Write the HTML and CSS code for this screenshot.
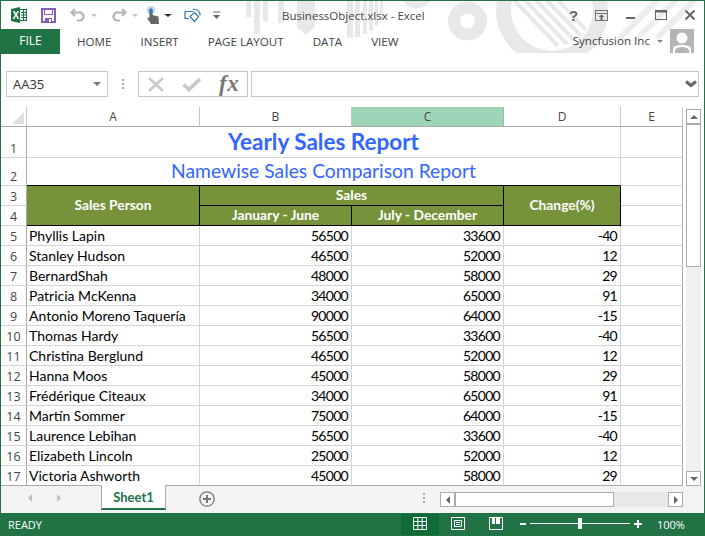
FILE: index.html
```html
<!DOCTYPE html>
<html lang="en">
<head>
    <meta charset="UTF-8">
    <meta name="viewport" content="width=device-width, initial-scale=1.0">
    <title>BusinessObject.xlsx - Excel</title>
    <link rel="stylesheet" href="styles.css">
</head>
<body>
<div class="window">
    <svg class="art" width="705" height="54" viewBox="0 0 705 54">
        <defs>
            <clipPath id="inner"><circle cx="552" cy="10" r="41"/></clipPath>
        </defs>
        <g fill="#e8e8e8">
            <rect x="246" y="1" width="5" height="16"/><rect x="254" y="1" width="6" height="33"/>
            <rect x="263" y="1" width="5" height="20"/><rect x="278" y="1" width="6" height="22"/>
            <path d="M297 1h18v26l-9 8-9-8z"/>
            <rect x="347" y="1" width="6" height="37"/><rect x="355" y="1" width="5" height="36"/>
            <rect x="363" y="1" width="4" height="33"/><rect x="369" y="1" width="4" height="30"/>
            <rect x="375" y="1" width="3" height="25"/><rect x="380" y="1" width="3" height="18"/>
            <path d="M403 1h27a16 16 0 0 1-27 0z"/>
            <path fill-rule="evenodd" d="M467.500 1.500a19.500 19.500 0 1 0 .1 0zM467.500 13.500a7.500 7.500 0 1 1-.1 0z"/>
            <circle cx="552" cy="10" r="56"/>
            <path d="M617 37l35-36h9l-40 40zM634 38l36-37h9l-41 41zM655 36l34-35h9l-39 39z" opacity=".8"/>
        </g>
        <circle cx="552" cy="10" r="41" fill="#fff"/>
        <g clip-path="url(#inner)" fill="none" stroke="#e8e8e8" stroke-width="4">
            <path d="M510 -4l48 50M521 -4l46 48M532 -4l42 44M543 -4l38 40M554 -4l32 34"/>
        </g>
        <rect x="0" y="53" width="705" height="1" fill="#fff"/>
    </svg>

    <div class="titlebar">
        <div class="qat">
            <svg class="icon" width="16" height="16" viewBox="0 0 16 16">
                <rect x="8.5" y="2.5" width="7" height="11" fill="#fff" stroke="#1e7145"/>
                <path d="M10 5.500h5M10 8h5M10 10.500h5M12.500 2v12" stroke="#1e7145"/>
                <path d="M0 2l9-2v16l-9-2z" fill="#1e7145"/>
                <text x="1.5" y="12" class="xl">X</text>
            </svg>
            <svg class="icon save" width="15" height="15" viewBox="0 0 15 15">
                <path d="M1 1h13v13H1z" fill="#fff" stroke="#8a5bb3" stroke-width="2"/>
                <path d="M3 1h9v6H3zM4 10h7v5H4z" fill="#8a5bb3"/>
                <path d="M4 2h7v4H4zM8 11h2v3H8z" fill="#fff"/>
            </svg>
            <svg class="icon undo" width="16" height="14" viewBox="0 0 16 14">
                <path d="M5 1L1.500 4.500 5 8M2 4.500h7a4 4 0 0 1 1 8H7" fill="none" stroke="#b4b4b4" stroke-width="2.200"/>
            </svg>
            <span class="caret light"></span>
            <svg class="icon redo" width="16" height="14" viewBox="0 0 16 14">
                <path d="M11 1l3.500 3.500L11 8M14 4.500H7a4 4 0 0 0-1 8h3" fill="none" stroke="#b4b4b4" stroke-width="2.200"/>
            </svg>
            <span class="caret light"></span>
            <svg class="icon touch" width="16" height="18" viewBox="0 0 16 18">
                <circle cx="5" cy="4" r="4" fill="#bcd3ec"/>
                <path d="M3.500 4a1.500 1.500 0 0 1 3 0v5l6 1.500.5 7.500H5L1 12l2.500-.5z" fill="#666"/>
                <path d="M3.500 4a1.500 1.500 0 0 1 3 0v4h-3z" fill="#3b78b9"/>
            </svg>
            <span class="caret dark"></span>
            <svg class="icon shapes" width="18" height="16" viewBox="0 0 18 16">
                <path d="M1 4.500h8.500M1 4.500v7h4" fill="none" stroke="#2f75b5" stroke-width="1.200"/>
                <path d="M9 2.500a5.500 5.500 0 0 1 7 6" fill="none" stroke="#2f75b5" stroke-width="1.200"/>
                <path d="M10.500 5.500l4 4-4 5-4.500-5z" fill="#fff" stroke="#2f75b5" stroke-width="1.200"/>
            </svg>
            <svg class="icon more" width="7" height="9" viewBox="0 0 7 9">
                <path d="M0 1h7" stroke="#666"/><path d="M0 4h7L3.500 8z" fill="#666"/>
            </svg>
        </div>
        <div class="doc-title">BusinessObject.xlsx - Excel</div>
        <div class="win-buttons">
            <span class="help">?</span>
            <svg width="13" height="11" viewBox="0 0 13 11">
                <rect x="0.5" y="0.5" width="12" height="10" fill="none" stroke="#777"/>
                <path d="M0 3.500h13" stroke="#777"/><path d="M6.500 4.500l-3 2.500h2v3h2V7h2z" fill="#666"/>
            </svg>
            <svg class="min" width="9" height="2" viewBox="0 0 9 2"><rect width="9" height="2" fill="#666"/></svg>
            <svg class="max" width="12" height="10" viewBox="0 0 12 10">
                <rect x="0.5" y="0.5" width="11" height="9" fill="none" stroke="#666"/>
                <rect width="12" height="2.500" fill="#666"/>
            </svg>
            <svg width="10" height="10" viewBox="0 0 10 10"><path d="M.5.5l9 9M9.500.5l-9 9" stroke="#666" stroke-width="2"/></svg>
        </div>
    </div>

    <div class="ribbon">
        <div class="tab-file">FILE</div>
        <nav class="tabs">
            <span>HOME</span>
            <span>INSERT</span>
            <span>PAGE LAYOUT</span>
            <span>DATA</span>
            <span>VIEW</span>
        </nav>
        <div class="account">
            <span class="account-name">Syncfusion Inc</span>
            <span class="caret small"></span>
            <svg class="avatar" width="24" height="24" viewBox="0 0 24 24">
                <rect width="24" height="24" fill="#b4b4b4"/>
                <circle cx="12" cy="9" r="5.500" fill="#fff"/>
                <path d="M3 24v-4c0-3 4-4 9-4s9 1 9 4v4z" fill="#fff"/>
                <path d="M5 24v-3c1-2 4-3 7-3s6 1 7 3v3z" fill="#b4b4b4"/>
            </svg>
        </div>
    </div>

    <div class="formula-bar">
        <div class="name-box">
            <span>AA35</span>
            <span class="caret grey"></span>
        </div>
        <div class="dots"><i></i><i></i><i></i></div>
        <div class="fx-box">
            <svg width="16" height="15" viewBox="0 0 16 15"><path d="M1 1l14 13M15 1L1 14" stroke="#c8c8c8" stroke-width="2.500"/></svg>
            <svg width="20" height="15" viewBox="0 0 20 15"><path d="M1.500 7.500l5.500 5L18 2" fill="none" stroke="#c8c8c8" stroke-width="3.500"/></svg>
            <span class="fx">fx</span>
        </div>
        <div class="formula-input">
            <svg width="12" height="8" viewBox="0 0 12 8"><path d="M1 1.500l5 4 5-4" fill="none" stroke="#666" stroke-width="3"/></svg>
        </div>
    </div>

    <div class="sheet-area">
        <table class="grid">
            <colgroup>
                <col class="c-row"><col class="c-a"><col class="c-b"><col class="c-c"><col class="c-d"><col class="c-e">
            </colgroup>
            <thead>
                <tr class="r-head">
                    <th class="corner"><span class="corner-mark"></span></th>
                    <th>A</th><th>B</th><th class="selected">C</th><th>D</th><th>E</th>
                </tr>
            </thead>
            <tbody id="rows">
                <tr class="r-title">
                    <th class="rn">1</th>
                    <td colspan="4" class="title">Yearly Sales Report</td><td></td>
                </tr>
                <tr class="r-sub">
                    <th class="rn">2</th>
                    <td colspan="4" class="subtitle">Namewise Sales Comparison Report</td><td></td>
                </tr>
                <tr>
                    <th class="rn">3</th>
                    <td rowspan="2" class="hd">Sales Person</td>
                    <td colspan="2" class="hd">Sales</td>
                    <td rowspan="2" class="hd">Change(%)</td><td></td>
                </tr>
                <tr>
                    <th class="rn">4</th>
                    <td class="hd">January - June</td>
                    <td class="hd">July - December</td><td></td>
                </tr>
                <tr><th class="rn">5</th><td>Phyllis Lapin</td><td class="num">56500</td><td class="num">33600</td><td class="num">-40</td><td></td></tr>
                <tr><th class="rn">6</th><td>Stanley Hudson</td><td class="num">46500</td><td class="num">52000</td><td class="num">12</td><td></td></tr>
                <tr><th class="rn">7</th><td>BernardShah</td><td class="num">48000</td><td class="num">58000</td><td class="num">29</td><td></td></tr>
                <tr><th class="rn">8</th><td>Patricia McKenna</td><td class="num">34000</td><td class="num">65000</td><td class="num">91</td><td></td></tr>
                <tr><th class="rn">9</th><td>Antonio Moreno Taquería</td><td class="num">90000</td><td class="num">64000</td><td class="num">-15</td><td></td></tr>
                <tr><th class="rn">10</th><td>Thomas Hardy</td><td class="num">56500</td><td class="num">33600</td><td class="num">-40</td><td></td></tr>
                <tr><th class="rn">11</th><td>Christina Berglund</td><td class="num">46500</td><td class="num">52000</td><td class="num">12</td><td></td></tr>
                <tr><th class="rn">12</th><td>Hanna Moos</td><td class="num">45000</td><td class="num">58000</td><td class="num">29</td><td></td></tr>
                <tr><th class="rn">13</th><td>Frédérique Citeaux</td><td class="num">34000</td><td class="num">65000</td><td class="num">91</td><td></td></tr>
                <tr><th class="rn">14</th><td>Martín Sommer</td><td class="num">75000</td><td class="num">64000</td><td class="num">-15</td><td></td></tr>
                <tr><th class="rn">15</th><td>Laurence Lebihan</td><td class="num">56500</td><td class="num">33600</td><td class="num">-40</td><td></td></tr>
                <tr><th class="rn">16</th><td>Elizabeth Lincoln</td><td class="num">25000</td><td class="num">52000</td><td class="num">12</td><td></td></tr>
                <tr class="r-last"><th class="rn">17</th><td>Victoria Ashworth</td><td class="num">45000</td><td class="num">58000</td><td class="num">29</td><td></td></tr>
            </tbody>
        </table>
        <div class="vscroll">
            <div class="sb-btn"><span class="tri up"></span></div>
            <div class="sb-track"><div class="sb-thumb"></div></div>
            <div class="sb-btn"><span class="tri down"></span></div>
        </div>
    </div>

    <div class="sheet-tabs">
        <div class="sheet-nav"><span class="tri left pale"></span><span class="tri right pale"></span></div>
        <div class="sheet-tab">Sheet1</div>
        <svg class="add-sheet" width="16" height="16" viewBox="0 0 16 16">
            <circle cx="8" cy="8" r="7.200" fill="none" stroke="#777" stroke-width="1.300"/>
            <path d="M8 4v8M4 8h8" stroke="#777" stroke-width="2"/>
        </svg>
        <div class="dots tab-dots"><i></i><i></i><i></i></div>
        <div class="hscroll">
            <div class="sb-btn"><span class="tri left"></span></div>
            <div class="h-track"><div class="h-thumb"></div></div>
            <div class="sb-btn"><span class="tri right"></span></div>
        </div>
    </div>

    <div class="statusbar">
        <span class="ready">READY</span>
        <div class="views">
            <div class="view active">
                <svg width="14" height="13" viewBox="0 0 14 13"><path d="M.5.5h13v12H.5zM.5 4.500h13M.5 8.500h13M4.800.5v12M9.200.5v12" fill="none" stroke="#fff"/></svg>
            </div>
            <div class="view">
                <svg width="14" height="13" viewBox="0 0 14 13"><path d="M.5.5h13v12H.5zM3.500 3.500h7v6h-7zM5 5.500h4M5 7.500h4" fill="none" stroke="#fff"/></svg>
            </div>
            <div class="view">
                <svg width="14" height="13" viewBox="0 0 14 13"><path d="M.5.5h13v12H.5z" fill="none" stroke="#fff"/><path d="M3 0h3v7H3zM7 0h4v7H7z" fill="#fff"/></svg>
            </div>
        </div>
        <div class="zoom">
            <span class="zoom-minus"></span>
            <div class="zoom-line"><span class="zoom-knob"></span></div>
            <span class="zoom-plus"></span>
        </div>
        <span class="percent">100%</span>
    </div>
</div>
</body>
</html>
```

FILE: styles.css
```css
* { box-sizing: border-box; }
body {
    margin: 0;
    padding: 0;
    font-family: "Open Sans", Arial, sans-serif;
    background: #fff;
}
.window {
    position: relative;
    width: 705px;
    height: 536px;
    border: 1px solid #217346;
    border-bottom: none;
    display: flex;
    flex-direction: column;
    overflow: hidden;
    color: #444;
}
.art { position: absolute; top: -1px; left: -1px; }

/* title bar */
.titlebar {
    position: relative;
    height: 28px;
    display: flex;
    align-items: center;
    flex-shrink: 0;
}
.qat { display: flex; align-items: center; width: 281px; padding-left: 10px; }
.qat .save { margin-left: 14px; }
.qat .undo { margin-left: 14px; }
.qat .redo { margin-left: 14px; }
.qat .touch { margin-left: 8px; }
.qat .shapes { margin-left: 12px; }
.qat .more { margin-left: 11px; }
.xl { font: bold 10px "Liberation Sans", sans-serif; fill: #fff; }
.caret { display: inline-block; width: 0; height: 0; border-style: solid; border-color: #aaa transparent transparent; border-width: 3px 3px 0; margin-left: 5px; }
.caret.light { border-top-color: #c4c4c4; }
.caret.dark { border-top-color: #333; border-width: 3px 4px 0; margin-left: 2px; }
.caret.small { border-top-color: #888; margin-left: 7px; }
.caret.grey { border-top-color: #777; border-width: 4px 4px 0; }
.doc-title { position: relative; font-size: 11.500px; color: #444; margin-top: 1px; }
.win-buttons {
    position: relative;
    margin-left: auto;
    display: flex;
    align-items: center;
    gap: 18px;
    padding-right: 9px;
}
.help { font: bold 15px "Liberation Sans", sans-serif; color: #666; width: 8px; }
.win-buttons .min { margin-top: 6px; }
.win-buttons .max { margin-left: 2px; }

/* ribbon */
.ribbon {
    position: relative;
    height: 25px;
    display: flex;
    flex-shrink: 0;
}
.tab-file {
    width: 59px;
    background: #217346;
    color: #fff;
    font-size: 12px;
    text-align: center;
    line-height: 24px;
}
.tabs { display: flex; font-size: 11.600px; line-height: 25px; gap: 29px; padding-left: 17px; color: #444; }
.account { margin-left: auto; display: flex; align-items: flex-start; padding-right: 10px; }
.account-name { font-size: 11.600px; line-height: 24px; }
.account .caret { margin-top: 11px; margin-right: 7px; }

/* formula bar */
.formula-bar {
    display: flex;
    align-items: stretch;
    height: 26px;
    margin-top: 17px;
    padding-left: 5px;
    padding-right: 5px;
    flex-shrink: 0;
}
.name-box {
    width: 102px;
    border: 1px solid #c6c6c6;
    display: flex;
    align-items: center;
    justify-content: space-between;
    padding: 0 6px;
    font-size: 13px;
    color: #333;
}
.dots { display: flex; flex-direction: column; justify-content: center; gap: 2px; width: 30px; align-items: center; }
.dots i { display: block; width: 2px; height: 2px; background: #aaa; }
.fx-box {
    width: 110px;
    border: 1px solid #c6c6c6;
    display: flex;
    align-items: center;
    gap: 17px;
    padding-left: 9px;
}
.fx-box svg + svg { margin-left: 1px; }
.fx { font: italic bold 23px/24px "Liberation Serif", serif; color: #777; letter-spacing: .5px; }
.formula-input {
    flex: 1;
    margin-left: 3px;
    border: 1px solid #c6c6c6;
    display: flex;
    align-items: center;
    justify-content: flex-end;
}
.formula-input svg { margin-right: 1px; }

/* sheet */
.sheet-area {
    display: flex;
    margin-top: 10px;
    height: 379px;
    flex-shrink: 0;
}
.grid {
    table-layout: fixed;
    border-collapse: separate;
    border-spacing: 0;
    width: 682px;
    height: 379px;
    font-family: Lato, "Liberation Sans", sans-serif;
    font-size: 14px;
    color: #000;
}
.c-row { width: 26px; }
.c-a { width: 173px; }
.c-b, .c-c { width: 152px; }
.c-d { width: 117px; }
.c-e { width: 62px; }
.grid tr { height: 20px; }
.grid .r-title { height: 31px; }
.grid .r-sub { height: 28px; }
.grid td, .grid th {
    padding: 0;
    border-right: 1px solid #d4d4d4;
    border-bottom: 1px solid #d4d4d4;
    font-weight: normal;
    overflow: hidden;
    white-space: nowrap;
}
.grid td { padding: 0 2px; line-height: 17px; }
.grid thead th {
    font: 12px "Open Sans", Arial, sans-serif;
    color: #444;
    text-align: center;
    border-right-color: #c6c6c6;
    border-bottom-color: #ababab;
    background: #fff;
}
.grid thead th.selected { background: #9fd5b7; border-right-color: #9fb7a8; }
.corner { position: relative; }
.corner-mark {
    position: absolute;
    right: 2px;
    bottom: 2px;
    width: 0;
    height: 0;
    border-style: solid;
    border-width: 0 0 12px 12px;
    border-color: transparent transparent #dfdfdf;
}
.grid .rn {
    font: 12.500px "Open Sans", Arial, sans-serif;
    color: #444;
    text-align: center;
    vertical-align: bottom;
    border-right-color: #ababab;
    line-height: 17px;
}
.grid .r-last td, .grid .r-last th { border-bottom-color: #ababab; }
.grid td:last-child { border-right-color: #ababab; }
.grid .title {
    text-align: center;
    font-size: 22.500px;
    font-weight: bold;
    color: #3366ff;
    vertical-align: middle;
    padding: 0 2px;
    line-height: 26px;
}
.grid .subtitle {
    text-align: center;
    font-size: 19.300px;
    color: #3366ff;
    border-bottom-color: #000;
    padding: 0 2px 1px;
    line-height: 24px;
}
.grid .hd {
    background: #76933c;
    color: #fff;
    font-weight: bold;
    font-size: 13.800px;
    text-align: center;
    border-right-color: #000;
    border-bottom-color: #000;
    padding-bottom: 2px;
}
.grid .num { text-align: right; letter-spacing: -.7px; padding-right: 3px; }
.vscroll {
    width: 15px;
    margin-left: 3px;
    margin-top: 2px;
    display: flex;
    flex-direction: column;
    background: #f0f0f0;
    height: 377px;
}
.sb-btn {
    width: 15px;
    height: 15px;
    background: #fff;
    border: 1px solid #ababab;
    display: flex;
    align-items: center;
    justify-content: center;
    flex-shrink: 0;
}
.sb-track { flex: 1; }
.sb-thumb { height: 143px; background: #fff; border: 1px solid #ababab; }
.tri { display: block; width: 0; height: 0; border-style: solid; border-color: transparent; }
.tri.up { border-width: 0 4px 4px; border-bottom-color: #666; }
.tri.down { border-width: 4px 4px 0; border-top-color: #666; }
.tri.left { border-width: 4px 4px 4px 0; border-right-color: #666; }
.tri.right { border-width: 4px 0 4px 4px; border-left-color: #666; }
.tri.pale.left { border-right-color: #c0c0c0; }
.tri.pale.right { border-left-color: #c0c0c0; }

/* sheet tabs */
.sheet-tabs {
    display: flex;
    align-items: flex-start;
    height: 27px;
    background: #f3f3f3;
    flex-shrink: 0;
}
.sheet-nav { width: 100px; display: flex; gap: 25px; padding: 8px 0 0 27px; }
.sheet-tab {
    width: 65px;
    height: 25px;
    margin-top: -1px;
    background: #fff;
    border: 1px solid #ababab;
    border-top: none;
    border-bottom: 2px solid #217346;
    color: #217346;
    font: bold 13px/24px Lato, "Liberation Sans", sans-serif;
    text-align: center;
}
.add-sheet { margin: 5px 0 0 33px; }
.tab-dots { width: auto; margin: 7px 0 0 208px; height: 10px; }
.hscroll {
    display: flex;
    margin: 6px 0 0 15px;
    width: 243px;
    height: 15px;
    background: #e8e8e8;
}
.h-track { flex: 1; }
.h-thumb { width: 159px; height: 15px; background: #fff; border: 1px solid #ababab; }

/* status bar */
.statusbar {
    flex: 1;
    margin-left: -1px;
    margin-right: -1px;
    background: #217346;
    color: #fff;
    display: flex;
    align-items: center;
    font-size: 11px;
}
.ready { padding-left: 8px; width: 401px; }
.views { display: flex; align-self: stretch; padding: 1px 0; }
.view { width: 38px; display: flex; align-items: center; justify-content: center; }
.view svg { margin-bottom: 2px; }
.view.active { background: #0f6a37; }
.zoom { display: flex; align-items: center; margin-left: 5px; margin-bottom: 2px; }
.zoom-minus { display: block; width: 6px; height: 2px; background: #fff; }
.zoom-line { position: relative; width: 100px; height: 1px; background: #fff; margin: 0 4px; }
.zoom-knob { position: absolute; top: -5px; left: 48px; width: 4px; height: 11px; background: #fff; }
.zoom-plus { display: block; width: 8px; height: 8px; background: linear-gradient(#fff, #fff) center / 8px 2px no-repeat, linear-gradient(#fff, #fff) center / 2px 8px no-repeat; }
.percent { margin-left: 15px; }
```
